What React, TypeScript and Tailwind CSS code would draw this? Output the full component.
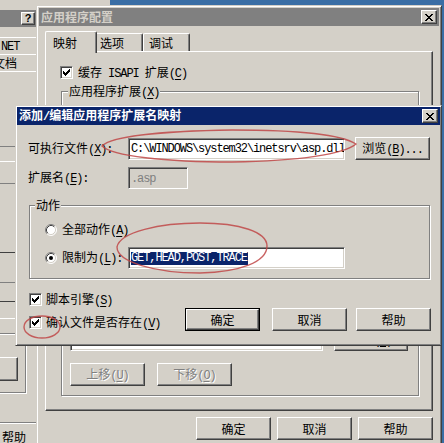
import React from "react";

const raised =
  "border border-t-white border-l-white border-r-[#404040] border-b-[#404040] shadow-[inset_-1px_-1px_0_#808080] bg-[#d4d0c8]";
const sunken =
  "border border-t-[#808080] border-l-[#808080] border-r-white border-b-white shadow-[inset_1px_1px_0_#404040,inset_-1px_-1px_0_#d4d0c8]";
const frame =
  "border border-t-[#d4d0c8] border-l-[#d4d0c8] border-r-[#404040] border-b-[#404040] shadow-[inset_1px_1px_0_#fff,inset_-1px_-1px_0_#808080]";
const etched = "border border-[#808080] shadow-[1px_1px_0_#fff,inset_1px_1px_0_#fff]";
const panel =
  "border border-t-white border-l-white border-r-[#404040] border-b-[#404040] shadow-[inset_-1px_-1px_0_#808080]";

type Seg = { t: string; a: boolean; u: boolean };

function parse(s: string): Seg[] {
  const out: Seg[] = [];
  for (let i = 0; i < s.length; i++) {
    let ch = s[i];
    let u = false;
    if (ch === "&" && i + 1 < s.length) {
      u = true;
      i++;
      ch = s[i];
    }
    const a = ch.charCodeAt(0) < 128;
    const last = out[out.length - 1];
    if (last && last.a === a && !last.u && !u) last.t += ch;
    else out.push({ t: ch, a, u });
  }
  return out;
}

function Tx({ s }: { s: string }) {
  return (
    <span className="whitespace-nowrap">
      {parse(s).map((g, i) =>
        g.a ? (
          <span
            key={i}
            className={
              g.u
                ? "font-['Liberation_Mono'] text-[12px] tracking-[-1.1px] underline underline-offset-[2px]"
                : "font-['Liberation_Mono'] text-[12px] tracking-[-1.1px]"
            }
          >
            {g.t}
          </span>
        ) : (
          <span key={i}>{g.t}</span>
        )
      )}
    </span>
  );
}

function Pix({ p, w, h }: { p: string[]; w: number; h: number }) {
  return (
    <svg width={w} height={h} viewBox={`0 0 ${w} ${h}`} shapeRendering="crispEdges">
      {p.flatMap((r, y) =>
        r.split("").map((c, x) =>
          c === "X" ? <rect key={`${x}-${y}`} x={x} y={y} width="1" height="1" fill="black" /> : null
        )
      )}
    </svg>
  );
}

const XP = ["XX....XX", ".XX..XX.", "..XXXX..", "...XX...", "..XXXX..", ".XX..XX.", "XX....XX"];
const CP = ["......X", ".....XX", "X...XXX", "XX.XXX.", "XXXXX..", ".XXX...", "..X...."];

function TitleBar({ title, active }: { title: string; active?: boolean }) {
  return (
    <div
      className={
        active
          ? "h-[18px] shrink-0 flex items-center justify-between pl-[2px] pr-[2px] bg-[#0a246a] text-white"
          : "h-[18px] shrink-0 flex items-center justify-between pl-[2px] pr-[2px] bg-[#808080] text-[#d4d0c8]"
      }
    >
      <span className="font-bold">
        <Tx s={title} />
      </span>
      <div className={`${raised} w-[16px] h-[14px] flex items-center justify-center`}>
        <Pix p={XP} w={8} h={7} />
      </div>
    </div>
  );
}

function Button({
  children,
  className = "",
  def = false,
  disabled = false,
}: {
  children: React.ReactNode;
  className?: string;
  def?: boolean;
  disabled?: boolean;
}) {
  const txt = disabled ? "text-[#808080] [text-shadow:1px_1px_0_#fff]" : "";
  if (def)
    return (
      <div className={`border border-black shrink-0 ${className}`}>
        <div className={`${raised} w-full h-full flex items-center justify-center ${txt}`}>{children}</div>
      </div>
    );
  return <div className={`${raised} shrink-0 flex items-center justify-center ${txt} ${className}`}>{children}</div>;
}

function Check() {
  return (
    <div className={`${sunken} w-[13px] h-[13px] bg-white flex items-center justify-center shrink-0`}>
      <Pix p={CP} w={7} h={7} />
    </div>
  );
}

function Radio({ on }: { on?: boolean }) {
  return (
    <svg width="12" height="12" viewBox="0 0 12 12" className="shrink-0">
      <circle cx="6" cy="6" r="5" fill="white" />
      <path d="M2.11 9.89 A5.5 5.5 0 0 1 9.89 2.11" stroke="#808080" strokeWidth="1" fill="none" />
      <path d="M2.82 9.18 A4.5 4.5 0 0 1 9.18 2.82" stroke="#404040" strokeWidth="1" fill="none" />
      <path d="M9.89 2.11 A5.5 5.5 0 0 1 2.11 9.89" stroke="#ffffff" strokeWidth="1" fill="none" />
      <path d="M9.18 2.82 A4.5 4.5 0 0 1 2.82 9.18" stroke="#d4d0c8" strokeWidth="1" fill="none" />
      {on ? <circle cx="6" cy="6" r="2" fill="black" /> : null}
    </svg>
  );
}

function LeftWindow() {
  return (
    <div className="absolute left-0 top-0 w-[36px] h-[443px] flex flex-col bg-[#d4d0c8]">
      <div className="h-[10px] shrink-0" />
      <div className="h-[17px] shrink-0 bg-[#808080] flex items-center justify-end pr-[1px]">
        <div className={`${raised} w-[14px] h-[13px] flex items-center justify-center font-['Liberation_Sans'] font-bold text-[11px] leading-[11px]`}>
          ?
        </div>
      </div>
      <div className="h-[10px] shrink-0" />
      <div className="h-[1px] shrink-0 bg-white" />
      <div className="h-[16px] shrink-0 flex items-center pl-[1px]">
        <Tx s="NET" />
      </div>
      <div className="h-[1px] shrink-0 bg-white" />
      <div className="h-[16px] shrink-0 flex items-center -ml-[7px]">
        <Tx s="文档" />
      </div>
      <div className="h-[1px] shrink-0 bg-white" />
      <div className="h-[74px] shrink-0" />
      <div className="h-[1px] shrink-0 bg-[#808080]" />
      <div className="h-[14px] shrink-0" />
      <div className="h-[1px] shrink-0 bg-white" />
      <div className="h-[21px] shrink-0" />
      <div className="h-[1px] shrink-0 bg-[#808080]" />
      <div className="h-[68px] shrink-0" />
      <div className="h-[1px] shrink-0 bg-[#404040]" />
      <div className="h-[29px] shrink-0" />
      <div className="h-[1px] shrink-0 bg-[#808080]" />
      <div className="h-[18px] shrink-0" />
      <div className="h-[1px] shrink-0 bg-[#404040]" />
      <div className="h-[16px] shrink-0" />
      <div className="h-[1px] shrink-0 bg-white" />
      <div className="h-[14px] shrink-0" />
      <div className={`${etched} h-[60px] w-[28px] -ml-[2px] shrink-0 flex flex-col`}>
        <div className="h-[23px] shrink-0" />
        <Button className="w-[20px] h-[24px] -ml-[1px]">
          <span />
        </Button>
      </div>
      <div className="h-[29px] shrink-0" />
      <div className="h-[1px] shrink-0 bg-[#808080]" />
      <div className="h-[1px] shrink-0 bg-white" />
      <div className="h-[6px] shrink-0" />
      <div className="pl-[2px]">
        <Tx s="帮助" />
      </div>
    </div>
  );
}

function ConfigWindow() {
  return (
    <div className={`absolute left-[36px] top-[5px] w-[406px] h-[460px] bg-[#d4d0c8] ${frame} p-[2px] flex flex-col`}>
      <TitleBar title="应用程序配置" />
      <div className="flex flex-col px-[6px]">
        <div className="flex items-end h-[20px] mt-[5px]">
          <div className="relative z-10 w-[52px] h-[22px] -mb-[2px] border-t border-l border-r border-t-white border-l-white border-r-[#404040] shadow-[inset_-1px_0_0_#808080] rounded-t-[2px] bg-[#d4d0c8] pl-[7px] pt-[4px]">
            <Tx s="映射" />
          </div>
          <div className="w-[46px] h-[18px] border-t border-r border-t-white border-r-[#404040] shadow-[inset_-1px_0_0_#808080] rounded-tr-[2px] pl-[3px] pt-[2px]">
            <Tx s="选项" />
          </div>
          <div className="w-[47px] h-[18px] border-t border-l border-r border-t-white border-l-white border-r-[#404040] shadow-[inset_-1px_0_0_#808080] rounded-t-[2px] pl-[5px] pt-[2px]">
            <Tx s="调试" />
          </div>
        </div>
        <div className={`h-[360px] ${panel} flex flex-col`}>
          <div className="mt-[14px] ml-[14px] flex items-center h-[13px]">
            <Check />
            <span className="ml-[5px]">
              <Tx s="缓存 ISAPI 扩展(&C)" />
            </span>
          </div>
          <div className={`relative mt-[12px] ml-[15px] w-[358px] h-[305px] ${etched} flex flex-col pt-[16px] pl-[8px]`}>
            <div className="absolute -top-[8px] left-[6px] px-[1px] bg-[#d4d0c8]">
              <Tx s="应用程序扩展(&X)" />
            </div>
            <div className="flex items-end">
              <div className={`${sunken} w-[253px] h-[243px] bg-white`} />
              <Button className="ml-[11px] w-[74px] h-[23px]">
                <Tx s="删除(&R)" />
              </Button>
            </div>
            <div className="flex mt-[12px]">
              <Button disabled className="w-[75px] h-[23px]">
                <Tx s="上移(&U)" />
              </Button>
              <Button disabled className="ml-[12px] w-[75px] h-[23px]">
                <Tx s="下移(&O)" />
              </Button>
            </div>
          </div>
        </div>
        <div className="flex justify-end gap-[6px] mt-[6px]">
          <Button className="w-[75px] h-[23px]">
            <Tx s="确定" />
          </Button>
          <Button className="w-[75px] h-[23px]">
            <Tx s="取消" />
          </Button>
          <Button className="w-[75px] h-[23px]">
            <Tx s="帮助" />
          </Button>
        </div>
      </div>
    </div>
  );
}

function Dialog() {
  return (
    <div className={`absolute left-[15px] top-[105px] w-[427px] h-[241px] bg-[#d4d0c8] ${frame} p-[1px] flex flex-col`}>
      <TitleBar active title="添加/编辑应用程序扩展名映射" />
      <div className="flex flex-col pl-[11px] pr-[9px]">
        <div className="flex items-center mt-[12px] h-[23px]">
          <div className="w-[100px] shrink-0">
            <Tx s="可执行文件(&X):" />
          </div>
          <div className={`${sunken} w-[217px] h-[22px] bg-white flex items-center pl-[2px] overflow-hidden shrink-0`}>
            <span className="font-['Liberation_Mono'] text-[12px] tracking-[-1.1px] whitespace-nowrap">
              {"C:\\WINDOWS\\system32\\inetsrv\\asp.dll"}
            </span>
          </div>
          <Button className="ml-[10px] w-[75px] h-[23px]">
            <Tx s="浏览(&B)..." />
          </Button>
        </div>
        <div className="flex items-center mt-[7px] h-[22px]">
          <div className="w-[100px] shrink-0">
            <Tx s="扩展名(&E):" />
          </div>
          <div className={`${sunken} w-[60px] h-[22px] flex items-center pl-[2px] text-[#808080]`}>
            <Tx s=".asp" />
          </div>
        </div>
        <div className={`relative mt-[16px] ml-[1px] w-[401px] h-[74px] ${etched} flex flex-col pt-[16px] pl-[15px]`}>
          <div className="absolute -top-[8px] left-[5px] px-[1px] bg-[#d4d0c8]">
            <Tx s="动作" />
          </div>
          <div className="flex items-center h-[16px]">
            <Radio />
            <span className="ml-[5px]">
              <Tx s="全部动作(&A)" />
            </span>
          </div>
          <div className="flex items-center h-[22px] mt-[9px]">
            <Radio on />
            <div className="ml-[5px] w-[66px] shrink-0">
              <Tx s="限制为(&L):" />
            </div>
            <div className={`${sunken} w-[217px] h-[22px] bg-white flex items-center pl-[2px]`}>
              <span className="font-['Liberation_Mono'] text-[12px] tracking-[-1.1px] whitespace-nowrap bg-[#0a246a] text-white leading-[13px] pr-[1px]">
                GET,HEAD,POST,TRACE
              </span>
            </div>
          </div>
        </div>
        <div className="flex mt-[14px]">
          <div className="flex flex-col ml-[1px]">
            <div className="flex items-center h-[13px]">
              <Check />
              <span className="ml-[4px]">
                <Tx s="脚本引擎(&S)" />
              </span>
            </div>
            <div className="flex items-center h-[13px] mt-[10px]">
              <Check />
              <span className="ml-[4px]">
                <Tx s="确认文件是否存在(&V)" />
              </span>
            </div>
          </div>
          <div className="ml-auto flex mt-[15px]">
            <Button def className="w-[75px] h-[23px]">
              <Tx s="确定" />
            </Button>
            <Button className="ml-[12px] w-[75px] h-[23px]">
              <Tx s="取消" />
            </Button>
            <Button className="ml-[9px] w-[75px] h-[23px]">
              <Tx s="帮助" />
            </Button>
          </div>
        </div>
      </div>
    </div>
  );
}

function Marks() {
  return (
    <svg className="absolute left-0 top-0 pointer-events-none z-50" width="444" height="443" viewBox="0 0 444 443">
      <g fill="none" stroke="#c04848" strokeWidth="1.4" strokeOpacity="0.85">
        <path d="M102,146 C112,136 165,131 232,130 C300,130 342,135 356,144 C344,154 300,161 232,162 C165,162 112,156 102,146 Z" />
        <path d="M117,247 C120,232 160,223 200,223 C240,223 267,232 267,246 C267,262 240,272 200,273 C155,273 117,262 117,247 Z" />
        <ellipse cx="42" cy="327" rx="18" ry="11" />
      </g>
    </svg>
  );
}

export default function App() {
  return (
    <div className="relative w-[444px] h-[443px] overflow-hidden bg-[#d4d0c8] text-black font-['Noto_Sans_CJK_SC',sans-serif] text-[12px] leading-[14px]">
      <div className="absolute left-[110px] top-0 w-[334px] h-[5px] bg-[#3a6ea5]" />
      <div className="absolute right-0 top-0 w-[2px] h-[443px] bg-[#3a6ea5]" />
      <LeftWindow />
      <ConfigWindow />
      <Dialog />
      <Marks />
    </div>
  );
}
